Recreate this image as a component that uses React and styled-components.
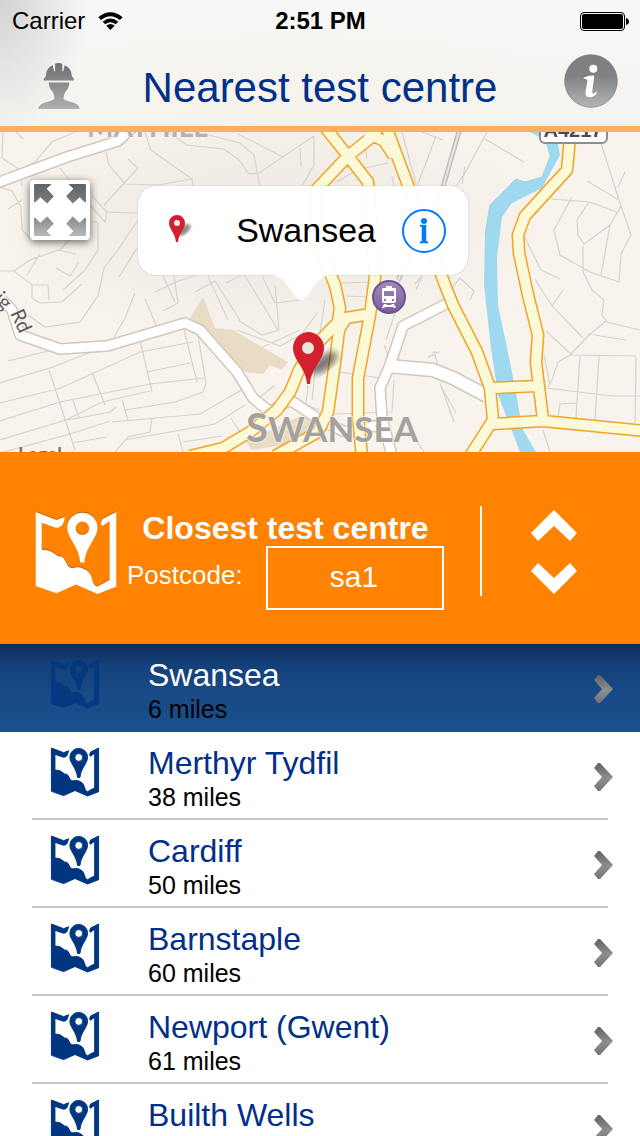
import React, { useState } from 'react'
import styled, { createGlobalStyle } from 'styled-components'

const GlobalStyle = createGlobalStyle`
	* {
		box-sizing: border-box;
	}
	body {
		margin: 0;
		background: #fff;
		font-family: "Liberation Sans", Arial, sans-serif;
	}
	button {
		padding: 0;
		border: none;
		background: none;
		font: inherit;
		cursor: pointer;
	}
	svg {
		display: block;
	}
`
const Screen = styled.div`
	display: flex;
	flex-direction: column;
	height: 100vh;
	overflow: hidden;
`

/* header */
const Header = styled.header`
	flex: none;
	border-bottom: 6px solid #ffae60;
	background:
		radial-gradient(ellipse 90px 130px at 0 0, rgba(195, 195, 195, 0.7), rgba(225, 225, 225, 0)),
		radial-gradient(ellipse at 45% 100%, #f7f3e9, rgba(247, 243, 233, 0) 70%),
		linear-gradient(#f8f8f8, #f4f3f1);
`
const StatusBar = styled.div`
	display: grid;
	grid-template-columns: 1fr auto 1fr;
	align-items: center;
	height: 42px;
	padding: 0 11px 0 12px;
	font-size: 24px;
	.carrier {
		display: flex;
		align-items: center;
		gap: 13px;
	}
	.battery {
		justify-self: end;
	}
`
const Time = styled.span`
	font-weight: bold;
`
const NavBar = styled.div`
	display: grid;
	grid-template-columns: 80px 1fr 80px;
	align-items: center;
	height: 84px;
`
const NavButton = styled.button`
	justify-self: ${p => p.$side};
	padding: ${p => p.$side === `end` ? `4px 0 0` : `0 0 6px 4px`};
`
const Title = styled.h1`
	margin: 0;
	padding-top: 8px;
	font-size: 42px;
	font-weight: normal;
	line-height: 48px;
	text-align: center;
	white-space: nowrap;
	color: #003087;
`

/* map */
const MapArea = styled.section`
	position: relative;
	flex: none;
	height: 320px;
	overflow: hidden;
	background: #f8f4ed;
	> svg {
		width: 100%;
		height: 100%;
	}
`
const ExpandButton = styled.button`
	position: absolute;
	top: 48px;
	left: 30px;
	display: grid;
	place-items: center;
	width: 60px;
	height: 60px;
	border-radius: 4px;
	background: #fff;
	box-shadow: 0 2px 8px rgba(0, 0, 0, 0.6);
`
const Callout = styled.div`
	position: absolute;
	top: 54px;
	left: calc(50% - 182px);
	display: flex;
	align-items: center;
	width: 330px;
	height: 89px;
	padding: 0 22px 0 28px;
	border-radius: 18px;
	background: rgba(255, 255, 255, 0.97);
	box-shadow: 0 0 1px rgba(0, 0, 0, 0.5);
	font-size: 34px;
	.name {
		flex: 1;
		padding-right: 26px;
		text-align: right;
	}
	.tip {
		position: absolute;
		top: 89px;
		left: 135px;
	}
`

/* search panel */
const Panel = styled.section`
	display: flex;
	flex: none;
	align-items: flex-start;
	height: 192px;
	padding: 54px 62px 0 35px;
	background: #ff8200;
	color: #fff;
	> svg {
		flex: none;
		margin-top: 6px;
		filter: drop-shadow(0 -1px 0 rgba(120, 50, 0, 0.4));
	}
`
const Search = styled.form`
	flex: 1;
	min-width: 0;
	margin: 4px 36px 0 10px;
	h2 {
		margin: 0;
		font-size: 32px;
		line-height: 36px;
		text-align: center;
		white-space: nowrap;
	}
`
const Field = styled.div`
	display: flex;
	align-items: center;
	justify-content: space-between;
	label {
		padding-bottom: 6px;
		font-size: 26px;
	}
	input {
		width: 178px;
		height: 64px;
		padding: 0 2px 2px 0;
		border: 2px solid #fff;
		border-radius: 0;
		background: none;
		font: 30px "Liberation Sans", Arial, sans-serif;
		text-align: center;
		color: #fff;
	}
`
const Stepper = styled.div`
	display: flex;
	flex-direction: column;
	gap: 20px;
	height: 90px;
	padding: 4px 0 0 48px;
	border-left: 2px solid #fff;
`

/* list */
const List = styled.ul`
	flex: 1;
	min-height: 0;
	margin: 0;
	padding: 0;
	overflow-y: auto;
	scrollbar-width: none;
	list-style: none;
`
const Item = styled.li`
	background: ${p => p.$selected ? `linear-gradient(#0b2c5a, #144079 20px, #184b88 50px, #194f8c)` : `#fff`};
	a {
		display: flex;
		align-items: center;
		height: 88px;
		margin: 0 32px;
		padding-left: 19px;
		border-bottom: 2px solid ${p => p.$selected ? `transparent` : `#c8c8c8`};
		color: ${p => p.$selected ? `#fff` : `#003087`};
		text-decoration: none;
	}
	.map {
		margin-bottom: 6px;
		overflow: visible;
		opacity: ${p => p.$selected ? 0.8 : 1};
	}
	.chevron {
		margin: 3px -5px 0 0;
	}
`
const Centre = styled.div`
	flex: 1;
	padding: 8px 0 0 49px;
	.name {
		font-size: 32px;
		line-height: 36px;
	}
	.distance {
		font-size: 25px;
		line-height: 32px;
		color: #000;
	}
`

const centres = [
	{ id: `swansea`, name: `Swansea`, miles: 6 },
	{ id: `merthyr-tydfil`, name: `Merthyr Tydfil`, miles: 38 },
	{ id: `cardiff`, name: `Cardiff`, miles: 50 },
	{ id: `barnstaple`, name: `Barnstaple`, miles: 60 },
	{ id: `newport`, name: `Newport (Gwent)`, miles: 61 },
	{ id: `builth-wells`, name: `Builth Wells`, miles: 65 },
]

const WifiIcon = () => <svg width="25" height="19" viewBox="0 0 75 57">
	<path d="M1 16 Q37 -14 74 16 L66 24 Q37 1 9 24 Z" />
	<path d="M14 29 Q37 10 61 29 L53 37 Q37 24 22 37 Z" />
	<path d="M25 41 Q37 31 50 41 L37 54 Z" />
</svg>

const BatteryIcon = () => <svg width="49" height="19" viewBox="0 0 49 19">
	<rect x="0.5" y="0.5" width="44" height="18" rx="3.5" fill="none" stroke="#000" />
	<rect x="2" y="2" width="41" height="15" rx="2" />
	<path d="M46 6 Q49 7 49 9.5 Q49 12 46 13 Z" />
</svg>

const WorkerIcon = () => <svg width="42" height="46" viewBox="0 0 123 136">
	<defs>
		<linearGradient id="worker" x1="0" y1="0" x2="0" y2="136" gradientUnits="userSpaceOnUse">
			<stop offset="0" stopColor="#6c6e70" />
			<stop offset="1" stopColor="#adafb1" />
		</linearGradient>
	</defs>
	<g fill="url(#worker)">
		<path d="M16 52 L17 46 Q22 42 23 36 Q25 14 43 7 L47 25 L50 24 L50 2 Q61 -2 71 2 L71 24 L74 25 L78 7 Q97 14 99 36 Q100 42 105 46 L106 52 Z" />
		<path d="M31 58 H92 Q91 75 83 82 Q75 90 75 106 Q80 112 97 115 Q120 119 123 136 H0 Q3 119 26 115 Q43 112 48 106 Q48 90 40 82 Q32 75 31 58 Z" />
	</g>
</svg>

const InfoIcon = () => <svg width="54" height="54" viewBox="0 0 162 162">
	<defs>
		<linearGradient id="info" x1="0" y1="0" x2="0" y2="1">
			<stop offset="0" stopColor="#7c7e80" />
			<stop offset="0.4" stopColor="#7f8183" />
			<stop offset="1" stopColor="#b3b5b6" />
		</linearGradient>
	</defs>
	<circle cx="81" cy="81" r="79" fill="url(#info)" stroke="#77797b" strokeWidth="2" />
	<g fill="#fff">
		<circle cx="88" cy="44" r="12" />
		<path d="M59 71 Q75 63 91 65 L85 110 Q84 119 88 119 Q93 119 97 112 L99 117 Q90 130 76 130 Q62 129 65 112 L70 82 Q71 73 59 74 Z" />
	</g>
</svg>

const ExpandIcon = () => {
	const arrow = `M0 4 Q0 0 4 0 H53 L38 14 L60 37 L40 59 L19 40 L4 55 H0 Z`
	return <svg width="52" height="52" viewBox="0 0 157 157">
		<defs>
			<linearGradient id="arrowTop" x1="0" y1="0" x2="0" y2="1">
				<stop offset="0" stopColor="#606266" />
				<stop offset="1" stopColor="#7c7e81" />
			</linearGradient>
			<linearGradient id="arrowBottom" x1="0" y1="0" x2="0" y2="1">
				<stop offset="0" stopColor="#b9b9ba" />
				<stop offset="1" stopColor="#88898c" />
			</linearGradient>
		</defs>
		<path d={arrow} fill="url(#arrowTop)" />
		<path d={arrow} fill="url(#arrowTop)" transform="translate(157 0) scale(-1 1)" />
		<path d={arrow} fill="url(#arrowBottom)" transform="translate(0 157) scale(1 -1)" />
		<path d={arrow} fill="url(#arrowBottom)" transform="translate(157 157) scale(-1 -1)" />
	</svg>
}

const CalloutPinIcon = () => <svg width="28" height="36" viewBox="0 0 28 36">
	<defs>
		<filter id="soft"><feGaussianBlur stdDeviation="1.5" /></filter>
	</defs>
	<ellipse cx="18" cy="17" rx="8" ry="4" fill="#000" opacity="0.45" transform="rotate(-40 18 17)" filter="url(#soft)" />
	<circle cx="11" cy="10" r="4" fill="#f6efee" />
	<path fillRule="evenodd" fill="#d2202e" d="M11 2 A8 8 0 0 1 19 10 C19 16 13 20 12 29 H10 C9 20 3 16 3 10 A8 8 0 0 1 11 2 Z M11 7 A3 3 0 1 0 11 13 A3 3 0 1 0 11 7 Z" />
</svg>

const DetailIcon = () => <svg width="44" height="44" viewBox="0 0 44 44">
	<circle cx="22" cy="22" r="21" fill="none" stroke="#007aff" strokeWidth="2" />
	<g fill="#007aff">
		<circle cx="22" cy="12" r="3" />
		<path d="M18 16 H24 V32 L26 33 V34 H18 V33 L20 32 V18 L18 17 Z" stroke="#007aff" strokeWidth="0.5" />
	</g>
</svg>

const TestCentreIcon = ({ size, color, outline = 0, className }) => <svg className={className} width={size} height={size} viewBox="0 0 240 244" fill={color} stroke={color} strokeWidth={outline}>
	<path d="M0 0 L62 24 L87 14 Q84 35 76 42 Q66 50 52 44 L18 32 V112 Q36 112 47 118 L67 132 Q80 132 84 139 L97 162 Q104 168 112 167 Q130 161 145 170 Q162 176 167 196 Q172 222 184 222 L220 202 V27 L198 42 Q190 34 200 20 L240 0 V222 L184 244 L120 216 L62 242 L0 220 Z" />
	<path fillRule="evenodd" d="M139 2 A45 45 0 0 1 184 47 C184 78 150 100 145 150 H133 C128 100 94 78 94 47 A45 45 0 0 1 139 2 Z M139 28 A20 20 0 1 0 139 68 A20 20 0 1 0 139 28 Z" />
</svg>

const StepIcon = ({ down }) => <svg width="48" height="32" viewBox="0 0 48 32">
	<path fill="#fff" d={down ? `M24 32 L47 9 L40 1 L24 16 L8 1 L1 9 Z` : `M24 0 L47 23 L40 31 L24 16 L8 31 L1 23 Z`} />
</svg>

const ChevronIcon = () => <svg className="chevron" width="19" height="28" viewBox="0 0 19 28">
	<defs>
		<linearGradient id="chevron" x1="0" y1="0" x2="0" y2="1">
			<stop offset="0" stopColor="#5f6164" />
			<stop offset="0.55" stopColor="#8d8e91" />
			<stop offset="1" stopColor="#707275" />
		</linearGradient>
	</defs>
	<path fill="url(#chevron)" d="M4 0 H6 L19 14 L6 28 H4 L0 23 L8 14 L0 5 Z" />
</svg>

const streets = [
	// north west
	`M3 132 L2 158 L20 170 L22 186`, `M16 132 L23 139`, `M75 132 L52 142 L35 162 L15 172`,
	`M60 168 L73 185 L90 205 L105 222 L107 212 L92 196`, `M106 152 L109 165 L125 184 L158 185 L192 179`,
	`M145 132 L151 150 L192 179 L193 187`, `M168 132 L187 145 L224 149 L239 160 L249 174 L259 173 L314 136`,
	`M205 134 L240 143 L254 155 L260 187`, `M238 134 L283 157`, `M300 148 L301 166`, `M314 136 V165 L302 186`,
	`M128 159 L138 168 L104 205`, `M0 187 L12 191 L21 207 L22 230 L31 239`,
	`M22 200 L8 209`, `M105 212 L138 213`, `M90 222 L98 222 V250 L85 270 L63 290`, `M88 222 L76 232 L60 250`,
	`M138 220 L120 247 L104 268 L98 296 L80 322 L45 327 L28 315`, `M0 271 L14 271 L32 285 L48 285 L49 300`,
	`M14 271 L30 260 L58 250 L76 254`, `M40 254 L27 275`, `M79 262 L70 276 L56 268`,
	`M32 285 V298 L40 303 L62 302 L82 284`, `M137 248 L119 277`, `M135 293 L125 318 L114 337`,
	`M145 299 L156 325`, `M155 292 L178 281`, `M174 276 L178 303 L163 311`, `M178 281 L195 276`,
	`M163 276 L175 302`, `M195 292 L215 281 L240 320`, `M208 276 L228 320`, `M226 283 L240 276`,
	`M245 276 L275 325 L278 331`, `M262 276 L275 303 L300 300`, `M238 320 L262 335 L279 330 L275 285`,
	`M237 330 L280 346 L302 334 L318 312`, `M263 347 L300 330`,
	// west
	`M8 361 L60 348`, `M0 383 L50 368 L107 346`, `M0 403 L61 388 L140 352 L193 342`, `M0 421 L60 402 L150 384 L204 378`,
	`M0 440 L66 420 L102 402 L150 391`, `M0 453 L70 434 L110 421`, `M49 370 L75 450`, `M92 372 L105 405`,
	`M73 400 L79 418`, `M140 340 L152 392`, `M184 330 L197 382`, `M198 336 L206 383 L203 392 L175 402 L125 410`,
	`M147 372 L190 363`, `M122 400 L128 420`, `M112 422 L200 414 L245 388`, `M152 418 L150 432 L128 437 L115 452`,
	`M125 440 L215 424 L245 405`, `M178 434 L183 452`, `M183 442 L222 436`, `M231 418 L240 432`, `M72 443 L107 437`,
	`M68 420 L110 412 L116 407`, `M257 400 L275 385`, `M308 385 L306 405 L320 410`,
	// centre
	`M402 132 L416 184`, `M422 132 L443 140`, `M436 136 L410 205`, `M487 132 L465 173 L456 186`, `M465 166 L462 184`,
	`M485 139 L524 162`, `M337 182 L357 170 L388 163`, `M392 176 L394 186`, `M365 145 L367 158`,
	`M342 283 L372 282`, `M346 296 L371 297`, `M400 276 L396 310 L386 340`, `M416 290 L422 276 L415 284`,
	`M450 290 L460 278 L474 291 L470 300`, `M340 372 L380 378`, `M394 380 L392 412 L335 414`, `M384 345 L390 360`,
	`M434 351 L438 366 M432 353 L440 352 M428 357 L436 354`, `M440 383 L454 422`, `M442 388 L456 413`,
	`M410 432 L424 452`, `M325 300 L318 345 L312 400`,
	// east
	`M601 143 L619 200 L631 235 L621 254 L619 282 L590 272 L560 255 L554 230 L572 197`,
	`M551 199 L590 202 L617 212`, `M587 181 L619 200`, `M618 187 L625 172`, `M589 202 L577 220 L578 235 L584 244 L610 225 L621 206`,
	`M610 225 L601 275`, `M583 246 V272 L592 290 L604 300 L602 315`, `M525 238 L541 270 L560 279`, `M602 315 L607 322 L640 330`,
	`M535 279 L552 306 L583 338`, `M552 306 L563 290`, `M607 320 L588 336 L570 355 L558 362 L552 380 L548 387`,
	`M588 334 L626 340`, `M546 331 L572 355 L636 356`, `M546 388 L612 396 L640 396`, `M580 356 L576 418`, `M599 356 L595 420`,
	`M636 357 L635 423`, `M577 403 L560 404 L558 418`, `M544 355 L550 385`, `M543 430 L550 452`,
]

const whiteRoads = [
	`M-6 184 L67 157 L118 141 L134 126`,
	`M2 300 L12 310 L20 335 L60 349 L107 346 L185 323 L200 330 L237 372 L253 398 L270 412 L290 400 L320 420 L345 432 L385 424`,
	`M452 301 L403 326 L390 365 L380 388 L382 418 L392 456`,
]

const yellowRoads = [
	`M386 126 L396 153 L409 188 L445 285 L453 305 L477 352 L490 388 L493 420 L470 456`,
	`M571 126 L567 170 L525 216 L518 235 L519 253 L528 295 L538 335 L536 362 L543 420`,
	`M493 388 L538 386`,
	`M493 424 L543 421 L646 431`,
	`M324 126 L348 156 L368 182 L375 277 L370 315 L358 378 L358 418 L362 456`,
	`M378 128 L373 136 L348 156 L316 190 L316 240 L335 285 L340 308 L338 322 L316 345 L300 368 L290 392 L277 410 L250 432 L223 448 L190 456`,
	`M366 132 L384 141 L394 156`,
	`M370 314 L346 318 L339 330 L336 355 L328 412 L318 432 L275 456`,
]

const MapDrawing = () => <svg viewBox="0 132 640 320" preserveAspectRatio="xMidYMid slice" role="img" aria-label="Map of Swansea">
	<defs>
		<filter id="shade"><feGaussianBlur stdDeviation="3" /></filter>
		<linearGradient id="station" x1="0" y1="0" x2="0" y2="1">
			<stop offset="0" stopColor="#a18bb9" />
			<stop offset="1" stopColor="#7c5c9d" />
		</linearGradient>
		<radialGradient id="haze">
			<stop offset="0" stopColor="#e6e0d8" />
			<stop offset="1" stopColor="#e6e0d8" stopOpacity="0" />
		</radialGradient>
	</defs>
	<ellipse cx="270" cy="225" rx="280" ry="120" fill="url(#haze)" opacity="0.7" />
	<path fill="#e8dcc4" d="M203 297 L215 328 L233 330 L288 362 L282 370 L270 365 L263 374 L245 372 L190 318 Z M300 416 L322 424 L312 440 L252 450 L246 442 Z" />
	<path fill="none" stroke="#d6d2cd" strokeWidth="1.2" d={streets.join(` `)} />
	<path fill="#9fd9f0" d="M530 132 L545 140 L550 157 L542 177 L525 182 L516 179 L490 205 L485 235 L484 285 L491 348 L498 395 L507 418 L520 452 H536 L522 428 L517 398 L510 362 L498 305 L497 258 L502 217 L512 203 L542 188 L560 155 L558 145 L560 132 Z" />
	<path fill="none" stroke="#a9cddb" d="M550 157 L542 177 L525 182 L516 179 L490 205 L485 235" />
	<path fill="none" stroke="#bfbfbf" strokeWidth="5" d="M460 128 L443 187 L425 230 L398 280" />
	<path fill="none" stroke="#e9e6e2" strokeWidth="2" d="M460 128 L443 187 L425 230 L398 280" />

	<g fill="none" strokeLinejoin="round">
		<path stroke="#d2c8bd" strokeWidth="12" d={whiteRoads.join(` `)} />
		<path stroke="#d2c8bd" strokeWidth="15" d="M388 366 L433 370 L453 378 L487 396" />
		<path stroke="#fff" strokeWidth="9" d={whiteRoads.join(` `)} />
		<path stroke="#fff" strokeWidth="12" d="M388 366 L433 370 L453 378 L487 396" />
		<path stroke="#f2a324" strokeWidth="13" d={yellowRoads.join(` `)} />
		<path stroke="#fbf9d8" strokeWidth="10" d={yellowRoads.join(` `)} />
	</g>

	<g fontFamily="Lato, sans-serif" fontWeight="bold" stroke="#f8f4ed" strokeWidth="2" strokeOpacity="0.7" paintOrder="stroke" strokeLinejoin="round">
		<text x="87" y="137" fontSize="28" fill="#b5b1ac">MAYHILL</text>
		<text x="246" y="442" fontSize="40" fill="#a5a29d">S<tspan fontSize="35">WANSEA</tspan></text>
		<text x="18" y="461" fontSize="19" fill="#77746f">Legal</text>
		<g fontSize="20" fontWeight="normal" fill="#5f5c58">
			<text transform="translate(-7 300) rotate(45)">ig</text>
			<text transform="translate(10 313) rotate(66)">Rd</text>
		</g>
	</g>

	<rect x="540" y="114" width="67" height="29" rx="5" fill="#fff" stroke="#8d8d8d" strokeWidth="2" />
	<text x="573" y="137" fontSize="20" fontWeight="bold" textAnchor="middle" fill="#4a4a4a">A4217</text>

	<circle cx="389" cy="297" r="16" fill="url(#station)" stroke="#6f5490" strokeWidth="2" />
	<path fill="#fff" fillRule="evenodd" d="M386 286 H392 V288 H395 Q396 288 396 290 V301 Q396 303 394 303 H384 Q382 303 382 301 V290 Q382 288 383 288 H386 Z M384 291 V296 H394 V291 Z M384 299 V301 H386 V299 Z M392 299 V301 H394 V299 Z M384 304 H387 L386 305 H392 L391 304 H394 L396 308 H394 L393 307 H385 L384 308 H382 Z" />

	<ellipse cx="324" cy="363" rx="16" ry="7" fill="#000" opacity="0.5" transform="rotate(-38 324 363)" filter="url(#shade)" />
	<circle cx="308" cy="348" r="7" fill="#ece6da" />
	<path fill="#d2202e" fillRule="evenodd" d="M308 332 A16 16 0 0 1 324 348 C324 360 311 368 310 384 H307 C306 368 293 360 293 348 A16 16 0 0 1 308 332 Z M308 342 A6 6 0 1 0 308 354 A6 6 0 1 0 308 342 Z" />
</svg>

const App = () => {
	const [selected, setSelected] = useState(0)
	const [postcode, setPostcode] = useState(`sa1`)

	const step = by => setSelected(Math.min(centres.length - 1, Math.max(0, selected + by)))

	return <Screen>
		<GlobalStyle />
		<Header>
			<StatusBar>
				<span className="carrier">Carrier <WifiIcon /></span>
				<Time>2:51 PM</Time>
				<span className="battery"><BatteryIcon /></span>
			</StatusBar>
			<NavBar>
				<NavButton $side="end" aria-label="Profile"><WorkerIcon /></NavButton>
				<Title>Nearest test centre</Title>
				<NavButton $side="start" aria-label="Information"><InfoIcon /></NavButton>
			</NavBar>
		</Header>

		<MapArea>
			<MapDrawing />
			<ExpandButton aria-label="Full screen map"><ExpandIcon /></ExpandButton>
			<Callout>
				<CalloutPinIcon />
				<span className="name">{centres[selected].name}</span>
				<button aria-label="Details"><DetailIcon /></button>
				<svg className="tip" width="56" height="26" viewBox="0 0 56 26">
					<path fill="#fff" d="M0 0 Q8 2 14 10 L22 21 Q28 28 34 21 L42 10 Q48 2 56 0 Z" />
				</svg>
			</Callout>
		</MapArea>

		<Panel>
			<TestCentreIcon size={82} color="#fff" />
			<Search onSubmit={e => e.preventDefault()}>
				<h2>Closest test centre</h2>
				<Field>
					<label htmlFor="postcode">Postcode:</label>
					<input id="postcode" value={postcode} onChange={e => setPostcode(e.target.value)} />
				</Field>
			</Search>
			<Stepper>
				<button aria-label="Previous" onClick={() => step(-1)}><StepIcon /></button>
				<button aria-label="Next" onClick={() => step(1)}><StepIcon down /></button>
			</Stepper>
		</Panel>

		<List>
			{centres.map((c, i) => <Item key={c.id} $selected={i === selected}>
				<a href={`#${c.id}`} onClick={() => setSelected(i)}>
					<TestCentreIcon className="map" size={48} color="#003580" outline={5} />
					<Centre>
						<div className="name">{c.name}</div>
						<div className="distance">{c.miles} miles</div>
					</Centre>
					<ChevronIcon />
				</a>
			</Item>)}
		</List>
	</Screen>
}

export default App
